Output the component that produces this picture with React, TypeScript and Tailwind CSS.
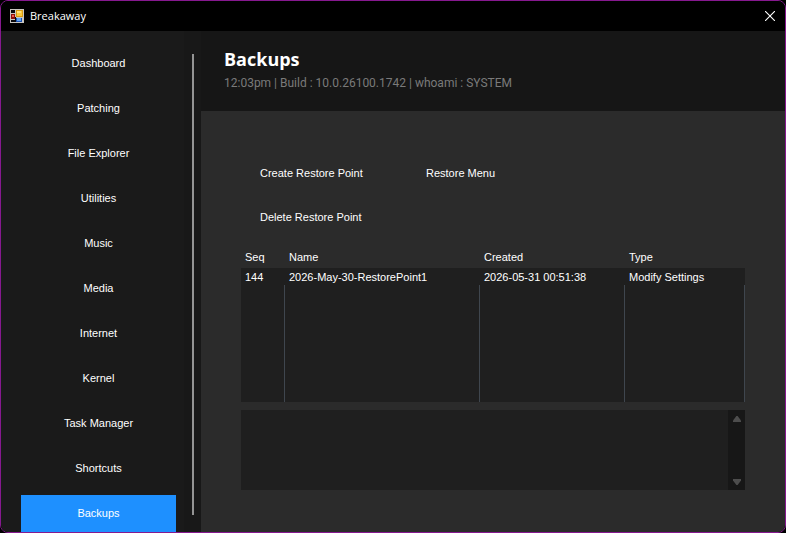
const pages = [
  "Dashboard",
  "Patching",
  "File Explorer",
  "Utilities",
  "Music",
  "Media",
  "Internet",
  "Kernel",
  "Task Manager",
  "Shortcuts",
  "Backups",
];

const restorePoints = [
  { seq: "144", name: "2026-May-30-RestorePoint1", created: "2026-05-31 00:51:38", type: "Modify Settings" },
];

function AppIcon() {
  return (
    <svg width="14" height="14" viewBox="0 0 14 14" shapeRendering="crispEdges" aria-hidden="true">
      <rect width="14" height="14" fill="#c9c6c0" />
      <rect x="1" y="1" width="4" height="3" fill="#08080c" />
      <rect x="1" y="11" width="4" height="2" fill="#08080c" />
      <rect x="5" y="8" width="1" height="5" fill="#08080c" />
      <rect x="6" y="9" width="6" height="4" fill="#1c4fae" />
      <rect x="7" y="9" width="4" height="3" fill="#5fa4f4" />
      <rect x="1" y="5" width="4" height="5" fill="#8d0f0a" />
      <rect x="2" y="6" width="2" height="2" fill="#ee5a4c" />
      <rect x="6" y="1" width="7" height="7" fill="#d69a12" />
      <rect x="7" y="2" width="5" height="5" fill="#fbc93a" />
      <rect x="7" y="2" width="4" height="2" fill="#ffe27a" />
    </svg>
  );
}

function TitleBar() {
  return (
    <header className="flex h-[30px] shrink-0 items-center bg-black pb-px pl-[9px] pr-[10px] font-['Open_Sans',sans-serif] text-white">
      <AppIcon />
      <span className="ml-1.5 text-[11px] leading-4">Breakaway</span>
      <button type="button" aria-label="Close" className="ml-auto">
        <svg width="10" height="10" viewBox="0 0 10 10" className="block" aria-hidden="true">
          <path d="M0 0L10 10M10 0L0 10" stroke="white" strokeWidth="1.1" />
        </svg>
      </button>
    </header>
  );
}

function Sidebar() {
  return (
    <aside className="flex w-[200px] shrink-0 bg-[#181818]">
      <nav className="flex w-[183px] flex-col gap-2 overflow-hidden bg-[#1a1a1a] pl-5 pr-2 pt-[14px]">
        {pages.map((page) => (
          <button
            key={page}
            type="button"
            className={`h-[37px] shrink-0 pb-0.5 ${page === "Backups" ? "bg-[#1e90ff]" : ""}`}
          >
            {page}
          </button>
        ))}
      </nav>
      <div className="mb-[17px] ml-2 mt-[23px] w-0.5 bg-[#949494]" />
    </aside>
  );
}

function RestoreTable() {
  const head = "px-1 pb-0.5 text-left font-normal";
  const cell = "px-1 text-left";
  const line = "border-r border-[#3f464e]";
  return (
    <table className="w-full table-fixed border-separate border-spacing-0">
      <colgroup>
        <col className="w-11" />
        <col className="w-[195px]" />
        <col className="w-[145px]" />
        <col />
      </colgroup>
      <thead>
        <tr className="h-[21px]">
          <th className={head}>Seq</th>
          <th className={head}>Name</th>
          <th className={head}>Created</th>
          <th className={head}>Type</th>
        </tr>
      </thead>
      <tbody className="bg-[#1f1f1f]">
        {restorePoints.map((point) => (
          <tr key={point.seq} className="h-[17px]">
            <td className={cell}>{point.seq}</td>
            <td className={cell}>{point.name}</td>
            <td className={cell}>{point.created}</td>
            <td className={cell}>{point.type}</td>
          </tr>
        ))}
        <tr className="h-[117px]" aria-hidden="true">
          <td className={line} />
          <td className={line} />
          <td className={line} />
          <td className={line} />
        </tr>
      </tbody>
    </table>
  );
}

function LogBox() {
  return (
    <div className="mt-2 flex h-20">
      <textarea aria-label="Output" readOnly className="min-w-0 flex-1 resize-none bg-[#1f1f1f] outline-none" />
      <div className="flex w-[17px] flex-col items-center justify-between bg-[#171717] pb-[5px] pt-1.5">
        <button type="button" aria-label="Scroll up">
          <svg width="8" height="6" viewBox="0 0 8 6" className="block">
            <path d="M3.4 0h1.2L8 4.6V6H0V4.6z" fill="#4d4d4d" />
          </svg>
        </button>
        <button type="button" aria-label="Scroll down">
          <svg width="8" height="6" viewBox="0 0 8 6" className="block">
            <path d="M3.4 6h1.2L8 1.4V0H0v1.4z" fill="#4d4d4d" />
          </svg>
        </button>
      </div>
    </div>
  );
}

export default function App() {
  return (
    <div className="h-screen bg-black">
      <div className="flex h-full flex-col overflow-hidden rounded-lg border border-[#86198f] bg-black font-['Liberation_Sans',Arial,sans-serif] text-[11px] leading-4 text-white">
        <TitleBar />
        <div className="flex min-h-0 flex-1">
          <Sidebar />
          <main className="flex min-w-0 flex-1 flex-col bg-[#2b2b2b]">
            <div className="h-20 shrink-0 bg-[#161616] pl-[23px] pt-4">
              <h1 className="font-['Open_Sans',sans-serif] text-[18px] font-bold leading-6">Backups</h1>
              <p className="font-[Roboto,sans-serif] text-[12px] leading-6 text-[#7a7a7a]">
                12:03pm | Build : 10.0.26100.1742 | whoami : SYSTEM
              </p>
            </div>
            <section className="pl-10 pr-10 pt-10">
              <div className="grid grid-cols-[147px_147px] gap-x-[19px] pl-[19px]">
                <button type="button" className="h-11 text-left">Create Restore Point</button>
                <button type="button" className="h-11 text-left">Restore Menu</button>
                <button type="button" className="h-11 text-left">Delete Restore Point</button>
              </div>
              <div className="mt-2">
                <RestoreTable />
                <LogBox />
              </div>
            </section>
          </main>
        </div>
      </div>
    </div>
  );
}
